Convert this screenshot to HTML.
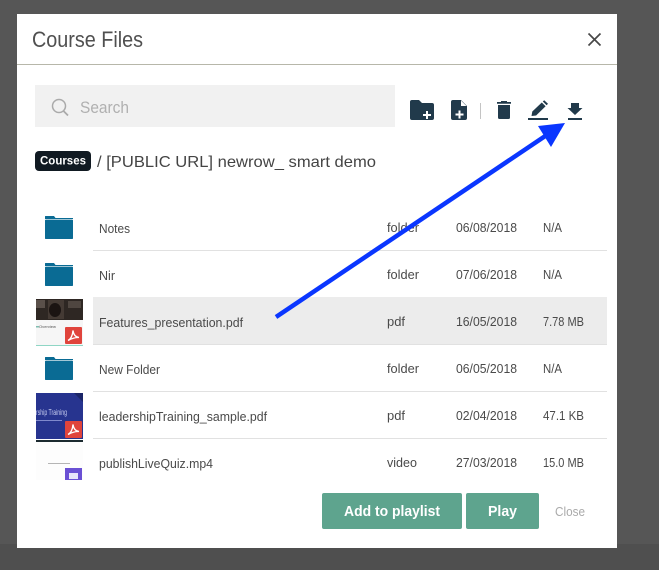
<!DOCTYPE html>
<html><head><meta charset="utf-8"><title>Course Files</title>
<style>
html,body{margin:0;padding:0;background:#555;width:659px;height:570px;overflow:hidden}
svg{display:block}
text{font-family:"Liberation Sans",sans-serif;fill:#444}
.r{font-size:12.5px;fill:#4a4a4a}
</style></head><body>
<svg width="659" height="570" viewBox="0 0 659 570" xmlns="http://www.w3.org/2000/svg">
<rect width="659" height="570" fill="#565656"/>
<rect y="544" width="659" height="26" fill="#4f4f4f"/>
<rect x="17" y="14" width="600" height="534" fill="#fff"/>
<rect x="17" y="64" width="600" height="1" fill="#b7b7aa"/>
<text x="32" y="47" font-size="22" textLength="111" lengthAdjust="spacingAndGlyphs" style="fill:#505050">Course Files</text>
<path d="M588.500 33.500l12 12M600.500 33.500l-12 12" stroke="#484848" stroke-width="1.700" fill="none"/>

<rect x="35" y="85" width="360" height="42" fill="#f1f1f1"/>
<circle cx="59" cy="106" r="6.500" fill="none" stroke="#aaa" stroke-width="1.500"/>
<path d="M63.500 111l4.500 4.500" stroke="#aaa" stroke-width="1.800"/>
<text x="80" y="113" font-size="17" textLength="49" lengthAdjust="spacingAndGlyphs" style="fill:#b0b0b0">Search</text>

<path d="M410 102a2 2 0 0 1 2-2h7l3 3h10a2 2 0 0 1 2 2v13a2 2 0 0 1-2 2h-20a2 2 0 0 1-2-2z" fill="#213a4b"/>
<path d="M423 115h8M427 111v8" stroke="#fff" stroke-width="2"/>
<path d="M451 102a2 2 0 0 1 2-2h8l6 6v12a2 2 0 0 1-2 2h-12a2 2 0 0 1-2-2z" fill="#213a4b"/>
<path d="M461 100.500l5.500 5.500h-5.500z" fill="#fff"/>
<path d="M455.500 114.500h8M459.500 110.500v8" stroke="#fff" stroke-width="2"/>
<rect x="480" y="103" width="1" height="16" fill="#c4c4c4"/>
<path d="M497 102h14v1.800h-14zM501 101h6v1h-6zM498 105h12v12.500a1.500 1.500 0 0 1-1.500 1.500h-9a1.500 1.500 0 0 1-1.500-1.500z" fill="#213a4b"/>
<path d="M531.500 116l.8-4.500 9.500-9 3.800 3.800-9.500 9.200z" fill="#213a4b"/>
<path d="M542.800 101.500l1.400-1.300 3.800 3.600-1.400 1.400z" fill="#213a4b"/>
<rect x="528" y="118" width="20" height="2" fill="#213a4b"/>
<path d="M571 103h8v5h3.500l-7.500 7-7.500-7h3.500z" fill="#213a4b"/>
<rect x="568" y="118" width="14" height="2" fill="#213a4b"/>

<rect x="35" y="151" width="56" height="20" rx="4" fill="#111a22"/>
<text x="40" y="164.500" font-size="12" font-weight="700" textLength="46" lengthAdjust="spacingAndGlyphs" style="fill:#fff">Courses</text>
<text x="97" y="167" font-size="16" textLength="279" lengthAdjust="spacingAndGlyphs">/ [PUBLIC URL] newrow_ smart demo</text>

<rect x="93" y="297" width="514" height="47" fill="#ececec"/>
<g fill="#e1e1e1">
<rect x="93" y="250" width="514" height="1"/>
<rect x="93" y="344" width="514" height="1"/>
<rect x="93" y="391" width="514" height="1"/>
<rect x="93" y="438" width="514" height="1"/>
</g>

<defs>
<g id="fld">
<path d="M45 216.500a.5.5 0 0 1 .5-.5h8.500l1.500 2h17.500v1h-28z" fill="#0a6b94"/>
<rect x="45" y="219.600" width="28" height="19.400" rx=".8" fill="#0a6b94"/>
</g>
<g id="pdf">
<rect width="17" height="17" rx="1" fill="#e0443c"/>
<path d="M3 13.500c3-1.500 4.500-5 5-10 .5 4 2.500 6.500 6 7-3.500-.2-7 .8-11 3z" fill="none" stroke="#fff" stroke-width="1.300"/>
</g>
</defs>

<use href="#fld"/>
<use href="#fld" y="47"/>
<use href="#fld" y="141"/>

<rect x="36" y="299" width="47" height="47" fill="#f6f6f6"/>
<rect x="36" y="299" width="47" height="21" fill="#2e2723"/>
<rect x="48" y="300" width="16" height="19" fill="#443a34"/>
<ellipse cx="55" cy="310" rx="6" ry="7" fill="#1b1412"/>
<rect x="36" y="300" width="9" height="8" fill="#5a504a"/>
<rect x="68" y="301" width="13" height="7" fill="#4f4640"/>
<rect x="36" y="326" width="3" height="1.500" fill="#7fbdb0"/>
<text x="39" y="328" font-size="4" textLength="17" lengthAdjust="spacingAndGlyphs" style="fill:#555">Overview</text>
<rect x="36" y="345" width="47" height="1" fill="#8fd6c5"/>
<use href="#pdf" x="65" y="327"/>

<rect x="36" y="393" width="47" height="46" fill="#27348f"/>
<path d="M74 393h9v9z" fill="#1b2568"/>
<text x="36" y="415" font-size="8" textLength="31" lengthAdjust="spacingAndGlyphs" style="fill:#c8cdf0">rship Training</text>
<rect x="36" y="420" width="26" height="1" fill="#8089cc"/>
<use href="#pdf" x="65" y="421"/>

<rect x="36" y="440" width="47" height="40" fill="#fdfdfd"/>
<rect x="36" y="440" width="47" height="2" fill="#1c2a30"/>
<rect x="48" y="463" width="22" height="1" fill="#b5b5b5"/>
<rect x="65" y="468" width="17" height="12" fill="#6a50d4"/>
<rect x="69" y="473" width="9" height="6" fill="#e8e4fa"/>

<text class="r" x="99" y="233" textLength="31" lengthAdjust="spacingAndGlyphs">Notes</text>
<text class="r" x="99" y="280" textLength="16" lengthAdjust="spacingAndGlyphs">Nir</text>
<text class="r" x="99" y="327" textLength="144" lengthAdjust="spacingAndGlyphs">Features_presentation.pdf</text>
<text class="r" x="99" y="374" textLength="61" lengthAdjust="spacingAndGlyphs">New Folder</text>
<text class="r" x="99" y="421" textLength="168" lengthAdjust="spacingAndGlyphs">leadershipTraining_sample.pdf</text>
<text class="r" x="99" y="468" textLength="114" lengthAdjust="spacingAndGlyphs">publishLiveQuiz.mp4</text>

<text class="r" x="387" y="232" textLength="32" lengthAdjust="spacingAndGlyphs">folder</text>
<text class="r" x="387" y="279" textLength="32" lengthAdjust="spacingAndGlyphs">folder</text>
<text class="r" x="387" y="326" textLength="18" lengthAdjust="spacingAndGlyphs">pdf</text>
<text class="r" x="387" y="373" textLength="32" lengthAdjust="spacingAndGlyphs">folder</text>
<text class="r" x="387" y="420" textLength="18" lengthAdjust="spacingAndGlyphs">pdf</text>
<text class="r" x="387" y="467" textLength="30" lengthAdjust="spacingAndGlyphs">video</text>

<text class="r" x="456" y="232" textLength="61" lengthAdjust="spacingAndGlyphs">06/08/2018</text>
<text class="r" x="456" y="279" textLength="61" lengthAdjust="spacingAndGlyphs">07/06/2018</text>
<text class="r" x="456" y="326" textLength="61" lengthAdjust="spacingAndGlyphs">16/05/2018</text>
<text class="r" x="456" y="373" textLength="61" lengthAdjust="spacingAndGlyphs">06/05/2018</text>
<text class="r" x="456" y="420" textLength="61" lengthAdjust="spacingAndGlyphs">02/04/2018</text>
<text class="r" x="456" y="467" textLength="61" lengthAdjust="spacingAndGlyphs">27/03/2018</text>

<text class="r" x="543" y="232" textLength="19" lengthAdjust="spacingAndGlyphs">N/A</text>
<text class="r" x="543" y="279" textLength="19" lengthAdjust="spacingAndGlyphs">N/A</text>
<text class="r" x="543" y="326" textLength="41" lengthAdjust="spacingAndGlyphs">7.78 MB</text>
<text class="r" x="543" y="373" textLength="19" lengthAdjust="spacingAndGlyphs">N/A</text>
<text class="r" x="543" y="420" textLength="41" lengthAdjust="spacingAndGlyphs">47.1 KB</text>
<text class="r" x="543" y="467" textLength="41" lengthAdjust="spacingAndGlyphs">15.0 MB</text>

<rect x="322" y="493" width="140" height="36" rx="2" fill="#5ea48e"/>
<rect x="466" y="493" width="73" height="36" rx="2" fill="#5ea48e"/>
<text x="344" y="516" font-size="15" font-weight="700" textLength="96" lengthAdjust="spacingAndGlyphs" style="fill:#fff">Add to playlist</text>
<text x="488" y="516" font-size="15" font-weight="700" textLength="29" lengthAdjust="spacingAndGlyphs" style="fill:#fff">Play</text>
<text x="555" y="516" font-size="12.500" textLength="30" lengthAdjust="spacingAndGlyphs" style="fill:#aaa">Close</text>

<path d="M276 317L546 135.500" stroke="#0a36ff" stroke-width="4.500" fill="none"/>
<path d="M565 123L538 126L551 147z" fill="#0a36ff"/>
</svg>
</body></html>
